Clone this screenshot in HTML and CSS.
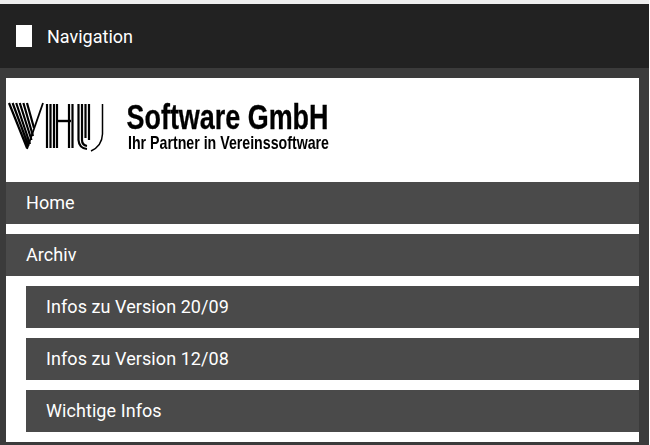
FILE: index.html
```html
<!DOCTYPE html>
<html lang="de">
<head>
<meta charset="utf-8">
<title>VHU Software GmbH</title>
<link rel="stylesheet" href="styles.css">
</head>
<body>
<div class="page">
  <header class="navbar">
    <span class="nav-icon"></span>
    <span class="nav-title">Navigation</span>
  </header>
  <main class="panel">
    <div class="logo">
      <svg class="logo-svg" width="633" height="104" viewBox="0 0 633 104">
        <g class="vhu" fill="none" stroke="#000" stroke-width="2.2">
          <path d="M3 25 L21 70 M6.6 25 L22.500 68 M10.200 25 L24 66 M13.800 25 L25.500 62 M17.400 25 L27 58 M21 25 L28 50"/>
          <path d="M21 71 L37 25" stroke-width="1.8"/>
          <path d="M41 26 V70 M44.500 26 V70 M48 26 V70 M51 26 V70"/>
          <path d="M51 43 H65" stroke-width="2.4"/>
          <path d="M63 26 V70 M66.500 26 V70"/>
          <path d="M72.500 26 V62 Q73 70 81 71 M76 26 V62 Q76 67 81 68 M79.500 26 V60 M83 26 V62"/>
          <path d="M96.500 26 V56 Q96 68 85 73" stroke-width="1.5"/>
        </g>
        <text class="logo-main" x="120.500" y="50.500" textLength="202" lengthAdjust="spacingAndGlyphs">Software GmbH</text>
        <text class="logo-sub" x="122" y="71" textLength="201" lengthAdjust="spacingAndGlyphs">Ihr Partner in Vereinssoftware</text>
      </svg>
    </div>
    <nav class="menu">
      <a class="item">Home</a>
      <a class="item">Archiv</a>
      <div class="submenu">
        <a class="item">Infos zu Version 20/09</a>
        <a class="item">Infos zu Version 12/08</a>
        <a class="item">Wichtige Infos</a>
      </div>
    </nav>
  </main>
</div>
</body>
</html>
```
FILE: styles.css
```css
html, body {
  margin: 0;
  height: 100%;
  overflow: hidden;
  background: #fff;
}
body {
  font-family: Roboto, "Liberation Sans", sans-serif;
}
.page {
  width: 649px;
  height: 445px;
  box-sizing: border-box;
  border-top: 4px solid #eee;
  background: #3b3b3b;
  overflow: hidden;
}
.navbar {
  height: 64px;
  background: #222;
  display: flex;
  align-items: center;
  padding-left: 16px;
  gap: 15px;
}
.nav-icon {
  width: 16px;
  height: 22px;
  background: #fff;
}
.nav-title {
  color: #fff;
  font-size: 18px;
}
.panel {
  margin: 10px 10px 0 6px;
  background: #fff;
  padding-bottom: 10px;
}
.logo {
  height: 104px;
}
.logo-svg {
  display: block;
}
.vhu {
  filter: blur(0.4px);
}
.logo-main {
  font-family: "Liberation Sans", sans-serif;
  font-weight: 700;
  font-size: 35px;
  stroke: #000;
  stroke-width: 0.3px;
  filter: blur(0.35px);
}
.logo-sub {
  font-family: "Liberation Sans", sans-serif;
  font-weight: 700;
  font-size: 18.500px;
  filter: blur(0.3px);
}
.menu, .submenu {
  display: flex;
  flex-direction: column;
  gap: 10px;
}
.submenu {
  padding-left: 20px;
}
.item {
  height: 42px;
  line-height: 42px;
  padding-left: 20px;
  background: #4a4a4a;
  color: #fff;
  font-size: 18px;
  letter-spacing: 0.07px;
}
```
